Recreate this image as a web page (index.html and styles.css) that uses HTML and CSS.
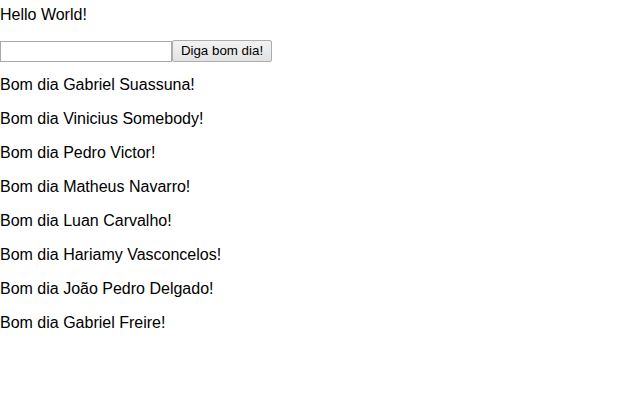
FILE: index.html
```html
<!DOCTYPE html>
<html>
<head>
<meta charset="utf-8">
<link rel="stylesheet" href="styles.css">
</head>
<body>
<div class="hello">Hello World!</div>
<form class="greet-form">
  <input class="name-input" type="text">
  <button class="greet-btn" type="button">Diga bom dia!</button>
</form>
<div class="list">
  <p class="greeting">Bom dia Gabriel Suassuna!</p>
  <p class="greeting">Bom dia Vinicius Somebody!</p>
  <p class="greeting">Bom dia Pedro Victor!</p>
  <p class="greeting">Bom dia Matheus Navarro!</p>
  <p class="greeting">Bom dia Luan Carvalho!</p>
  <p class="greeting">Bom dia Hariamy Vasconcelos!</p>
  <p class="greeting">Bom dia João Pedro Delgado!</p>
  <p class="greeting">Bom dia Gabriel Freire!</p>
</div>
</body>
</html>
```

FILE: styles.css
```css
html, body {
  background: #ffffff;
}
body {
  margin: 0;
  font-family: "Liberation Sans", Arial, sans-serif;
  font-size: 16px;
  color: #000000;
}
.hello {
  padding-top: 6px;
}
.greet-form {
  margin: 16px 0 0 0;
  display: flex;
  align-items: center;
  height: 22px;
}
.name-input {
  box-sizing: border-box;
  width: 172px;
  height: 21px;
  margin: 1px 0 0 0;
  padding: 1px 2px;
  border: 1px solid #a9a9a9;
  background: #ffffff;
  font-family: "Liberation Sans", Arial, sans-serif;
  font-size: 13.333px;
  outline: none;
}
.greet-btn {
  box-sizing: border-box;
  width: 100px;
  height: 22px;
  margin: 0;
  padding: 0 6px;
  border: 1px solid #adadad;
  border-radius: 2px;
  background: linear-gradient(#f3f3f3, #e2e2e2);
  color: #000000;
  font-family: "Liberation Sans", Arial, sans-serif;
  font-size: 13.333px;
  line-height: 20px;
}
.list {
  padding-top: 0;
}
.greeting {
  margin: 16px 0;
}
.list .greeting:first-child {
  margin-top: 14px;
}
```
